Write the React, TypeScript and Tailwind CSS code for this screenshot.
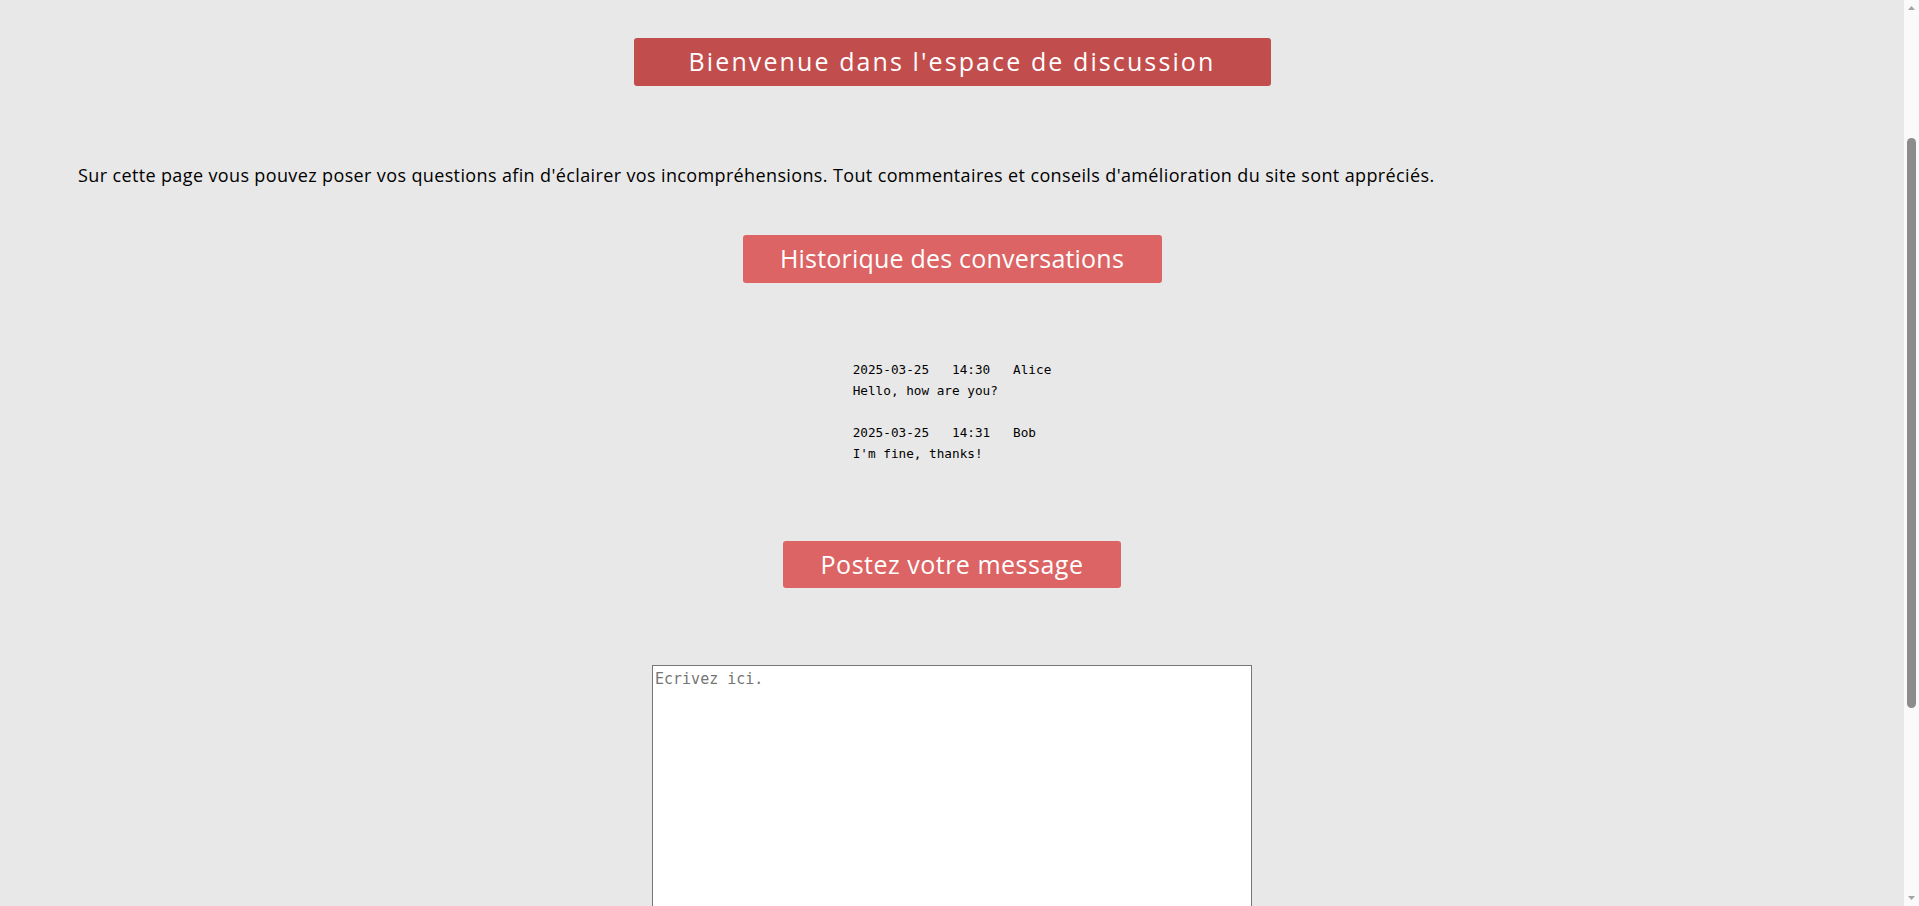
import React from "react";

const messages = [
  { date: "2025-03-25", time: "14:30", author: "Alice", text: "Hello, how are you?" },
  { date: "2025-03-25", time: "14:31", author: "Bob", text: "I'm fine, thanks!" },
];

const App = () => {
  return (
    <div className="h-screen flex overflow-hidden bg-[#e8e8e8]">
      <main className="flex-1 overflow-hidden flex flex-col items-center pt-[38px] pb-[40px] font-['Open_Sans',sans-serif]">
        <h1 className="shrink-0 w-[637px] h-[48px] rounded-[3px] bg-[#c24d4d] text-white text-[25px] tracking-[2.1px] flex items-center justify-center">
          Bienvenue dans l'espace de discussion
        </h1>

        <p className="self-stretch px-[78px] mt-[77px] text-[18px] leading-[24px] tracking-[0.37px] text-black">
          Sur cette page vous pouvez poser vos questions afin d'éclairer vos incompréhensions. Tout commentaires et
          conseils d'amélioration du site sont appréciés.
        </p>

        <h2 className="shrink-0 mt-[48px] w-[419px] h-[48px] rounded-[3px] bg-[#dc6464] text-white text-[25px] tracking-[0.2px] flex items-center justify-center">
          Historique des conversations
        </h2>

        <div className="mt-[76px] font-['DejaVu_Sans_Mono',monospace] text-[12.7px] leading-[21px] text-black whitespace-pre">
          {messages.map((m, i) => (
            <div key={i} className={i > 0 ? "mt-[21px]" : ""}>
              <div>{`${m.date}   ${m.time}   ${m.author}`}</div>
              <div>{m.text}</div>
            </div>
          ))}
        </div>

        <h2 className="shrink-0 mt-[77px] w-[338px] h-[47px] rounded-[3px] bg-[#dc6464] text-white text-[25px] tracking-[0.5px] flex items-center justify-center">
          Postez votre message
        </h2>

        <textarea
          placeholder="Ecrivez ici."
          className="shrink-0 mt-[77px] w-[600px] h-[320px] bg-white border border-[#767676] p-[2px] font-['DejaVu_Sans_Mono',monospace] text-[15px] text-black placeholder:text-[#757575] resize-none"
        />
      </main>

      {/* scrollbar strip */}
      <div className="w-[15px] shrink-0 bg-[#fafafa] flex flex-col items-center">
        <svg width="15" height="17" viewBox="0 0 15 17" className="shrink-0">
          <path d="M4 10 L7.5 6 L11 10 Z" fill="#a3a3a3" />
        </svg>
        <div className="mt-[121px] w-[9px] h-[570px] rounded-full bg-[#8c8c8c]" />
        <div className="flex-1" />
        <svg width="15" height="17" viewBox="0 0 15 17" className="shrink-0">
          <path d="M4 7 L7.5 11 L11 7 Z" fill="#a3a3a3" />
        </svg>
      </div>
    </div>
  );
};

export default App;
